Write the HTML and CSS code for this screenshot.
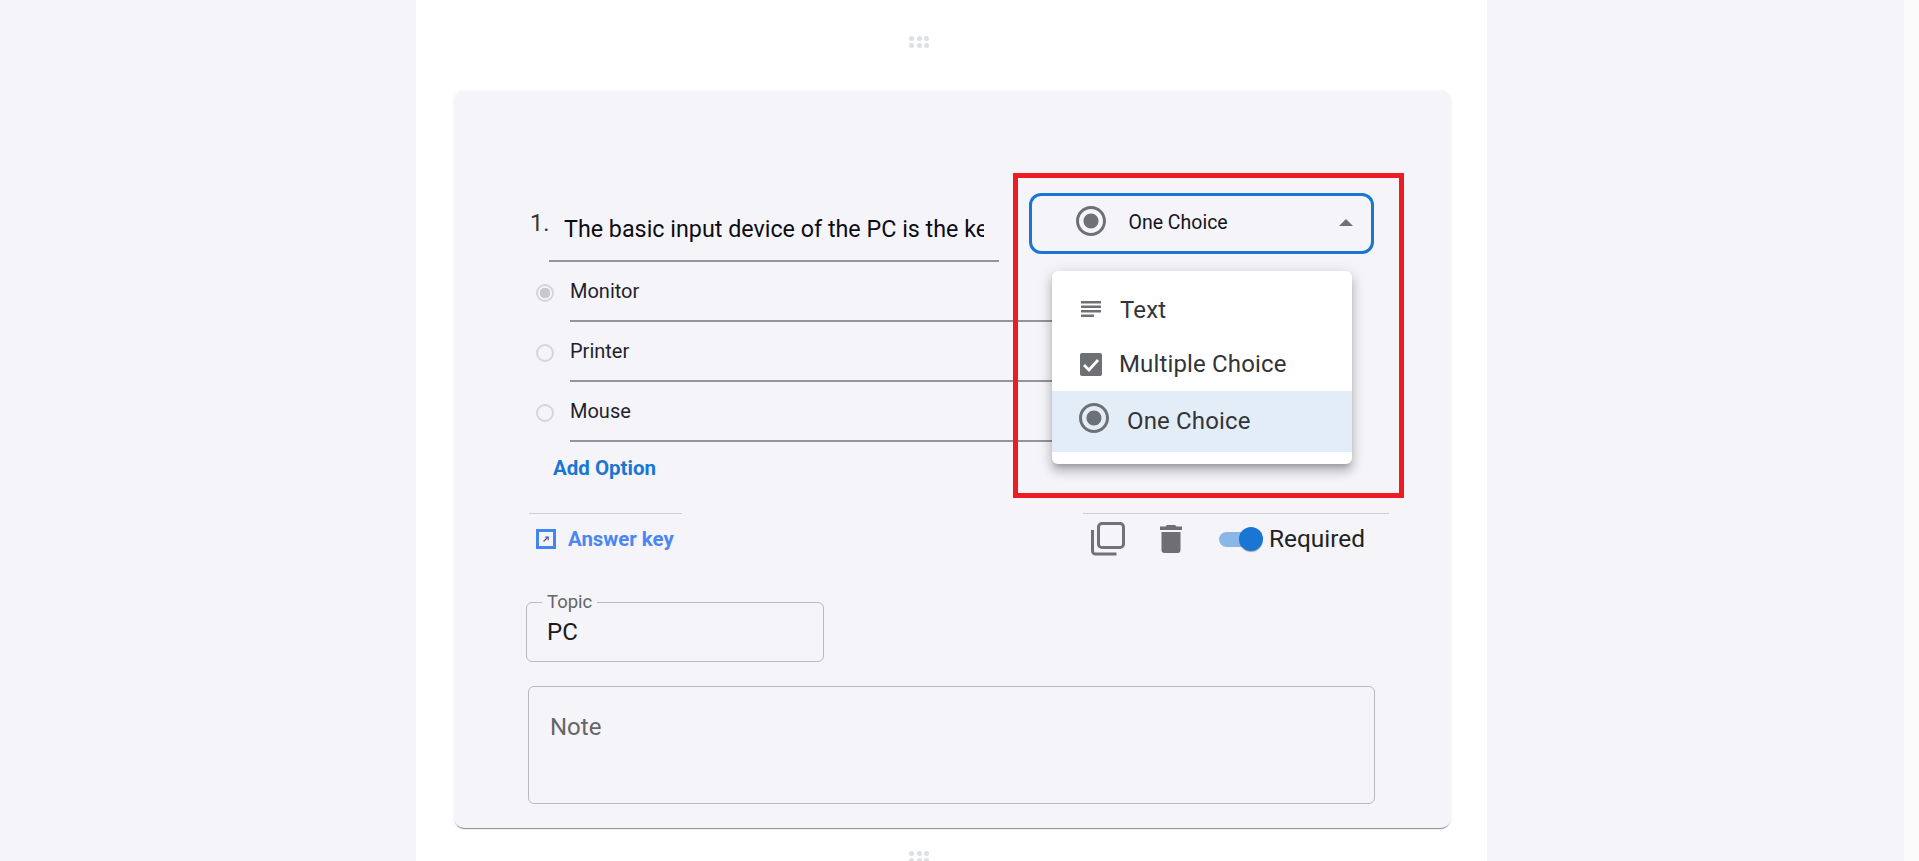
FILE: index.html
```html
<!DOCTYPE html>
<html>
	<head>
		<meta charset="UTF-8">
		<title>Question editor</title>
		<link rel="stylesheet" href="styles.css">
	</head>
	<body>
		<div class="page">
			<div class="side"></div>
			<div class="sheet">
				<div class="handle"><span></span><span></span><span></span><span></span><span></span><span></span></div>
				<div class="card">
					<div class="main">
						<div class="left">
							<div class="question">
								<span class="num">1.</span>
								<div class="qinput"><div class="qtext">The basic input device of the PC is the key</div></div>
							</div>
							<div class="option">
								<i class="radio checked"></i>
								<div class="otext">Monitor</div>
							</div>
							<div class="option">
								<i class="radio"></i>
								<div class="otext">Printer</div>
							</div>
							<div class="option">
								<i class="radio"></i>
								<div class="otext">Mouse</div>
							</div>
							<a class="add" href="#">Add Option</a>
						</div>
						<div class="right">
							<div class="select">
								<svg class="ic36" viewBox="0 0 24 24"><path d="M12 7c-2.76 0-5 2.24-5 5s2.24 5 5 5 5-2.24 5-5-2.24-5-5-5zm0-5C6.48 2 2 6.48 2 12s4.480 10 10 10 10-4.480 10-10S17.520 2 12 2zm0 18c-4.420 0-8-3.580-8-8s3.580-8 8-8 8 3.580 8 8-3.580 8-8 8z"/></svg>
								<span class="seltext">One Choice</span>
								<i class="arrow"></i>
							</div>
						</div>
					</div>
					<div class="menu">
						<div class="item">
							<svg class="ic-text" viewBox="0 0 20 18"><path d="M0 0h20v2.400H0zM0 4.500h20v2.400H0zM0 9h20v2.400H0zM0 13.500h13v2.400H0z"/></svg>
							<span>Text</span>
						</div>
						<div class="item">
							<svg class="ic-check" viewBox="0 0 22 23"><rect width="22" height="23" rx="2"/><path d="M4 12l5 5 9-10" fill="none" stroke="#fff" stroke-width="2.800"/></svg>
							<span>Multiple Choice</span>
						</div>
						<div class="item selected">
							<svg class="ic36" viewBox="0 0 24 24"><path d="M12 7c-2.76 0-5 2.24-5 5s2.24 5 5 5 5-2.24 5-5-2.24-5-5-5zm0-5C6.48 2 2 6.48 2 12s4.480 10 10 10 10-4.480 10-10S17.520 2 12 2zm0 18c-4.420 0-8-3.580-8-8s3.580-8 8-8 8 3.580 8 8-3.580 8-8 8z"/></svg>
							<span>One Choice</span>
						</div>
					</div>
					<div class="mark"></div>
					<div class="actions">
						<div class="akey">
							<a href="#">
								<svg class="ic-key" viewBox="0 0 20 20"><path d="M1.500 1.500h17v17h-17z" fill="none" stroke="#4285f4" stroke-width="3"/><path d="M7.500 12.500l4-4M9 8h3.200v3.200" fill="none" stroke="#4a5a9a" stroke-width="1.200"/></svg>
								Answer key
							</a>
						</div>
						<div class="tools">
							<svg class="ic-copy" viewBox="0 0 34 34"><path d="M11 1.500h18a3.500 3.500 0 0 1 3.500 3.500v17a3.500 3.500 0 0 1-3.500 3.500H11A3.500 3.500 0 0 1 7.500 22V5A3.500 3.500 0 0 1 11 1.500z" fill="none" stroke-width="3"/><path d="M1.500 8v21A3 3 0 0 0 4.500 32h21" fill="none" stroke-width="3"/></svg>
							<svg class="ic-trash" viewBox="0 0 22 28"><path d="M7 0h8l1.500 1.500H22v3.500H0V1.500h5.500zM1.500 7h19v18a3 3 0 0 1-3 3h-13a3 3 0 0 1-3-3z"/></svg>
							<div class="switch"><i class="track"></i><i class="thumb"></i></div>
							<span class="req">Required</span>
						</div>
					</div>
					<fieldset class="topic">
						<legend>Topic</legend>
						<div class="topicval">PC</div>
					</fieldset>
					<div class="note">Note</div>
				</div>
				<div class="handle low"><span></span><span></span><span></span><span></span><span></span><span></span></div>
			</div>
			<div class="side"></div>
			<div class="scroll"></div>
		</div>
	</body>
</html>
```

FILE: styles.css
```css
*{
	padding:0px;margin:0px;box-sizing:border-box;
}
html,body{
	height:861px;
	overflow:hidden;
}
body{
	font-family:Roboto,"Liberation Sans",sans-serif;
	color:#1b1b1f;
}
a{
	text-decoration:none;
}
.page{
	display:grid;
	grid-template-columns:416px 1071px 417px 15px;
	height:861px;
}
.side{
	background-color:#f5f5f9;
}
.scroll{
	background-color:#fbfbfb;
}
.sheet{
	height:861px;
	padding-top:36px;
	background-color:#fff;
	overflow:hidden;
}
.handle{
	width:20px;
	height:12px;
	margin-left:493px;
	display:grid;
	grid-template-columns:repeat(3,5px);
	grid-auto-rows:5px;
	gap:2px 2.500px;
}
.handle span{
	border-radius:50%;
	background-color:#dde0e4;
}
.handle.low{
	margin-top:23px;
}

.card{
	position:relative;
	width:997px;
	height:737px;
	margin:43px 0 0 38px;
	padding-top:102px;
	background-color:#f4f4f9;
	border-radius:10px;
	box-shadow:0 2px 1px -1px rgba(0,0,0,.45),0 0 3px rgba(0,0,0,.08);
}
.main{
	display:flex;
	height:320px;
}
.left{
	width:545px;
	padding-left:76px;
}
.question{
	display:flex;
	height:69px;
}
.num{
	width:19px;
	padding-top:16px;
	font-size:23.500px;
	line-height:28px;
	color:#333;
}
.qinput{
	width:450px;
	height:69px;
	padding:22px 15px 0 15px;
	border-bottom:2px solid #959599;
}
.qtext{
	font-size:23.300px;
	line-height:28px;
	color:#0c0c14;
	white-space:nowrap;
	overflow:hidden;
}
.option{
	display:flex;
	align-items:center;
	height:60px;
	margin-left:-76px;
	padding-left:82px;
}
.radio{
	flex:none;
	display:block;
	width:18px;
	height:18px;
	margin-right:16px;
	margin-top:1px;
	border:2px solid #d6d6d8;
	border-radius:50%;
}
.radio.checked{
	background:radial-gradient(circle,#c8c8ca 0,#c8c8ca 5px,transparent 5.500px);
}
.otext{
	flex:none;
	width:580px;
	height:60px;
	padding-top:17px;
	font-size:20px;
	line-height:24px;
	border-bottom:2px solid #959599;
	color:#1f1f2b;
}
.add{
	display:block;
	margin:14px 0 0 23px;
	font-size:20.500px;
	line-height:24px;
	font-weight:700;
	color:#1976d2;
}
.right{
	width:345px;
	margin-left:30px;
}
.select{
	display:flex;
	align-items:center;
	width:345px;
	height:61px;
	padding-left:40.500px;
	padding-bottom:6px;
	border:3px solid #1976d2;
	border-radius:12px;
}
.ic36{
	display:block;
	flex:none;
	width:36px;
	height:36px;
	fill:#6d7175;
}
.seltext{
	flex:1;
	margin-left:20px;
	font-size:19.500px;
	color:#14141e;
	padding-top:3px;
}
.arrow{
	width:0;
	height:0;
	margin-right:18px;
	margin-top:4px;
	border-left:7.500px solid transparent;
	border-right:7.500px solid transparent;
	border-bottom:7px solid #6d7175;
}

/* dropdown lies over the option rows */
.menu{
	position:absolute;
	left:598px;
	top:180px;
	width:300px;
	height:193px;
	padding-top:12px;
	background-color:#fff;
	border-radius:6px;
	box-shadow:0 5px 5px -3px rgba(0,0,0,.2),0 8px 10px 1px rgba(0,0,0,.14),0 3px 14px 2px rgba(0,0,0,.12);
}
.item{
	display:flex;
	align-items:center;
	height:54px;
	font-size:24px;
	letter-spacing:.15px;
	color:#333438;
	padding-left:29px;
}
.item span{
	margin-left:19px;
}
.item.selected{
	height:61px;
	padding-left:24px;
	background-color:#e3edf8;
}
.item.selected span{
	margin-left:15px;
	margin-top:-2px;
}
.item.selected .ic36{
	margin-top:-8px;
}
.ic-text{
	width:20px;
	height:18px;
	fill:#6d7175;
}
.ic-check{
	width:22px;
	height:23px;
	margin-left:-1px;
	margin-right:-2px;
	fill:#6d7175;
}

/* red annotation round the select */
.mark{
	position:absolute;
	left:559px;
	top:82px;
	width:391px;
	height:325px;
	border:5px solid #ed1c24;
}

.actions{
	display:flex;
	height:78px;
}
.akey{
	width:153px;
	height:50px;
	margin-left:75px;
	padding:0 0 0 7px;
	border-top:1px solid #cfcfd2;
}
.akey a{
	display:flex;
	align-items:center;
	height:50px;
	font-size:20.400px;
	font-weight:700;
	color:#4c86f5;
}
.ic-key{
	width:20px;
	height:20px;
	margin-right:12px;
}
.tools{
	display:flex;
	align-items:center;
	width:306px;
	height:50px;
	margin-left:401px;
	padding-left:8px;
	border-top:1px solid #cfcfd2;
}
.ic-copy{
	width:34px;
	height:34px;
	stroke:#727275;
}
.ic-trash{
	width:22px;
	height:28px;
	margin-left:35px;
	fill:#6f6f72;
}
.switch{
	position:relative;
	width:44px;
	height:24px;
	margin-left:37px;
}
.track{
	display:block;
	width:36px;
	height:15px;
	margin-top:5px;
	border-radius:8px;
	background-color:#8ab6e8;
}
.thumb{
	position:absolute;
	left:20px;
	top:0px;
	width:24px;
	height:24px;
	border-radius:50%;
	background-color:#1976d2;
	box-shadow:0 2px 1px -1px rgba(0,0,0,.2),0 1px 1px rgba(0,0,0,.14);
}
.req{
	margin-left:6px;
	font-size:24.400px;
	color:#222;
}
.topic{
	width:298px;
	height:71px;
	margin-left:72px;
	padding:0 20px;
	border:1px solid #b9b9be;
	border-radius:6px;
}
.topic legend{
	padding:0 5px;
	margin-left:-5px;
	font-size:18.500px;
	line-height:22px;
	color:#666;
}
.topicval{
	margin-top:5px;
	font-size:24px;
	line-height:28px;
	color:#1a1a1a;
}
.note{
	width:847px;
	height:118px;
	margin:24px 0 0 74px;
	padding:26px 21px;
	font-size:24px;
	line-height:28px;
	color:#666;
	border:1px solid #b9b9be;
	border-radius:6px;
}
```
